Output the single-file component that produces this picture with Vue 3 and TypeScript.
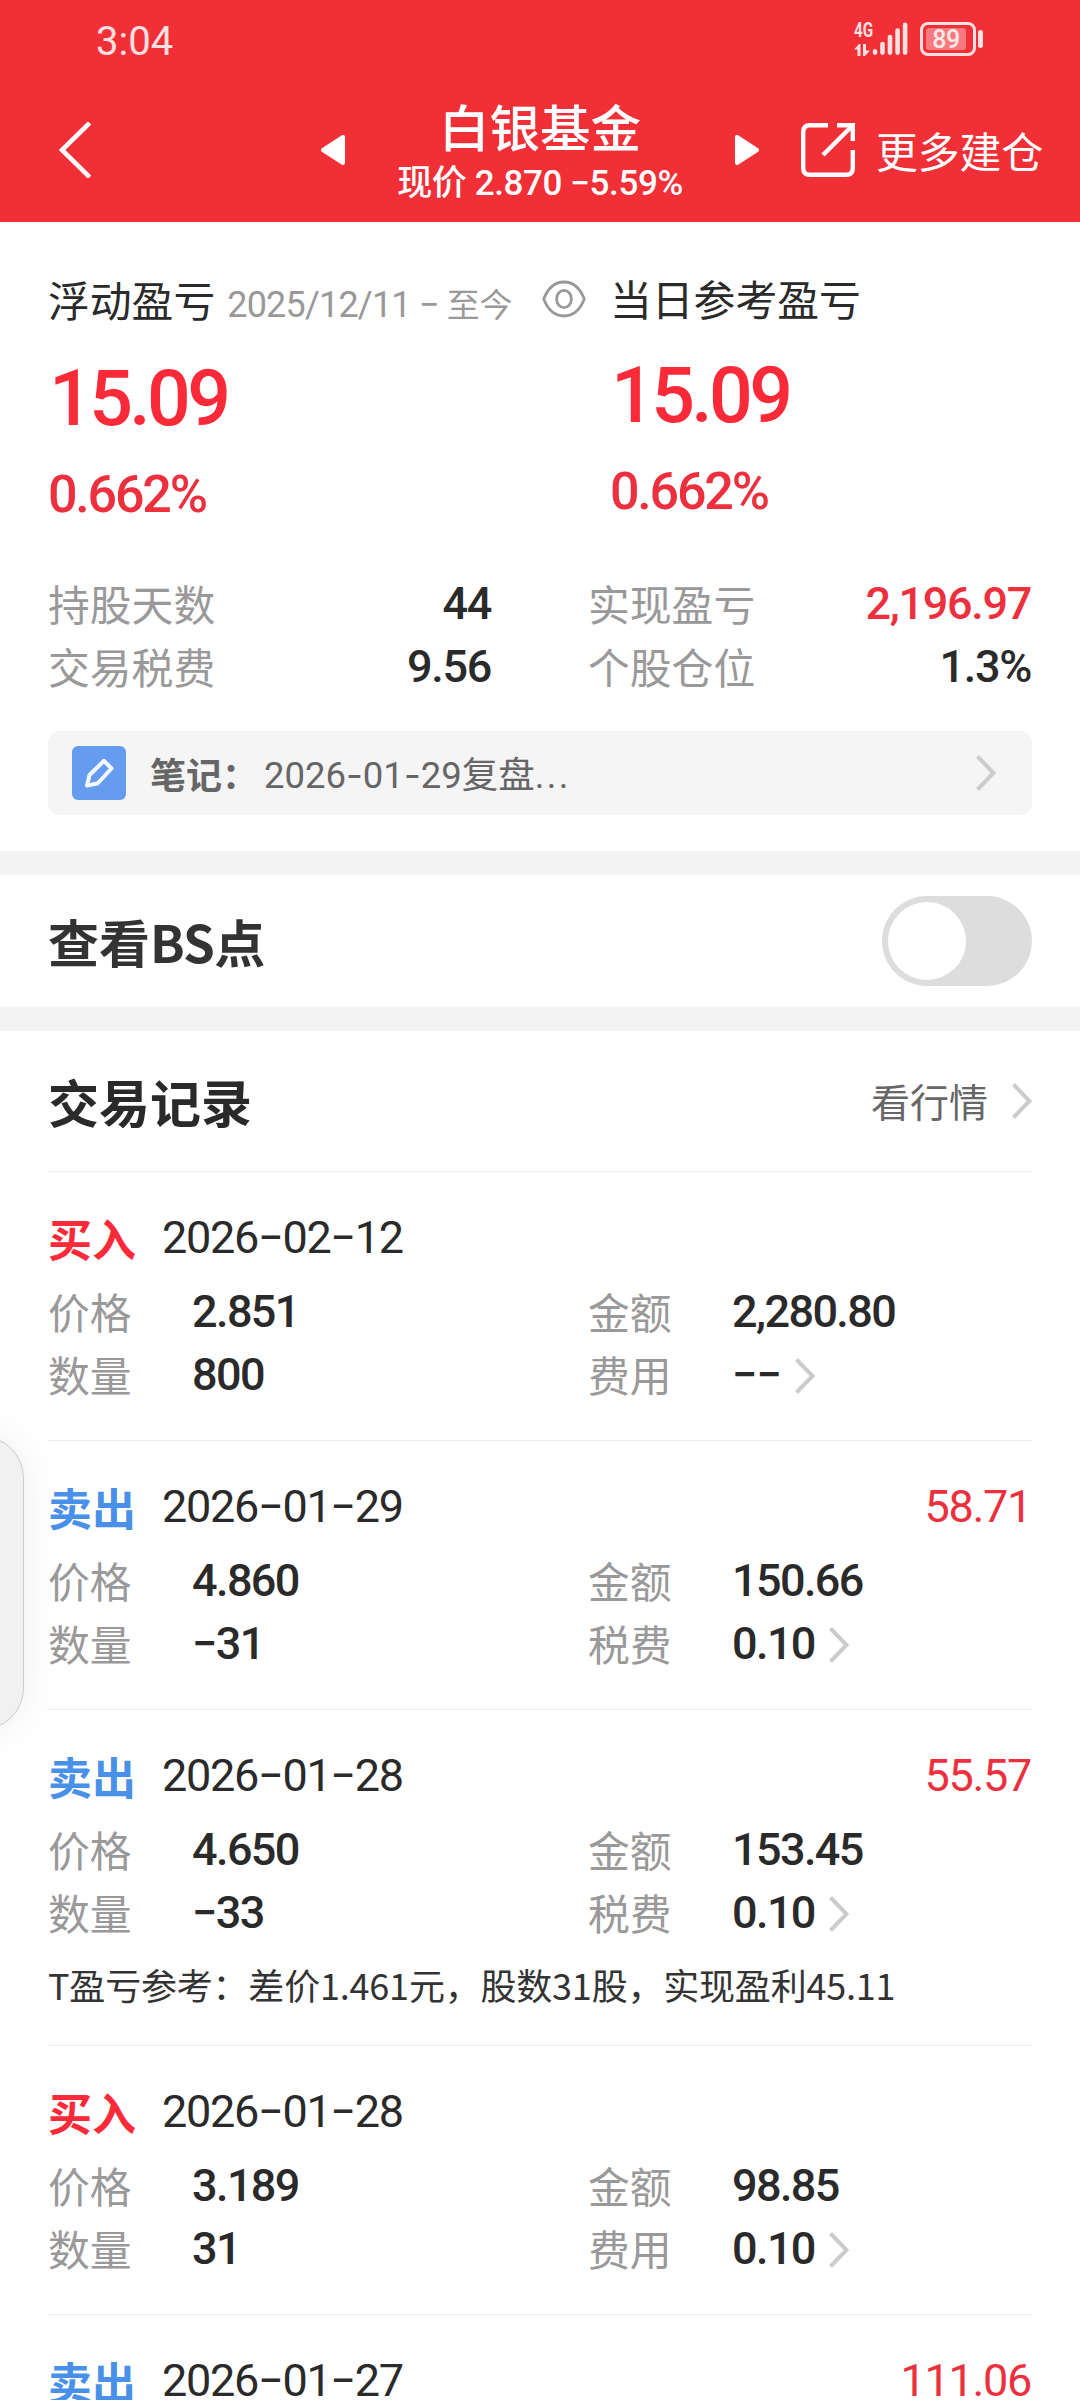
<script setup lang="ts">
interface TradeRecord {
  side: 'buy' | 'sell'
  date: string
  price?: string
  qty?: string
  amount?: string
  feeLabel?: string
  fee?: string
  profit?: string
  note?: string
}

const records: TradeRecord[] = [
  { side: 'buy', date: '2026−02−12', price: '2.851', qty: '800', amount: '2,280.80', feeLabel: '费用', fee: '−−' },
  { side: 'sell', date: '2026−01−29', price: '4.860', qty: '−31', amount: '150.66', feeLabel: '税费', fee: '0.10', profit: '58.71' },
  {
    side: 'sell', date: '2026−01−28', price: '4.650', qty: '−33', amount: '153.45', feeLabel: '税费', fee: '0.10', profit: '55.57',
    note: 'T盈亏参考：差价1.461元，股数31股，实现盈利45.11',
  },
  { side: 'buy', date: '2026−01−28', price: '3.189', qty: '31', amount: '98.85', feeLabel: '费用', fee: '0.10' },
  { side: 'sell', date: '2026−01−27', profit: '111.06' },
]

const stats = [
  { label: '持股天数', value: '44', up: false },
  { label: '实现盈亏', value: '2,196.97', up: true },
  { label: '交易税费', value: '9.56', up: false },
  { label: '个股仓位', value: '1.3%', up: false },
]
</script>

<template>
  <div class="screen">
    <header class="top">
      <div class="status">
        <span class="time">3:04</span>
        <div class="indicators">
          <div class="net">
            <span class="net-type">4G</span>
            <svg width="16" height="12" viewBox="0 0 16 12">
              <path d="M0 5.5 5 0H6.5V12H3.5V5.5ZM9 0H12V6.5H16L11 12H9Z" fill="#ffe0e1" />
            </svg>
          </div>
          <svg class="bars" width="36" height="34" viewBox="0 0 36 34">
            <g stroke="#ffe0e1" stroke-width="4.6" stroke-linecap="round">
              <path d="M3 29.3V30.6M10.5 22V30.6M18 15V30.6M25.6 8.5V30.6M33.1 2.8V30.6" />
            </g>
          </svg>
          <div class="battery"><div class="level">89</div></div>
          <div class="battery-cap"></div>
        </div>
      </div>
      <nav class="nav">
        <svg class="back" width="32" height="56" viewBox="0 0 32 56">
          <path d="M29 2.5 3 28 29 53.5" fill="none" stroke="#fff" stroke-width="4.6" stroke-linecap="square" />
        </svg>
        <svg width="24" height="30" viewBox="0 0 24 30">
          <path d="M22 2V28L2 15Z" fill="#fff" stroke="#fff" stroke-width="4" stroke-linejoin="round" />
        </svg>
        <div class="heading">
          <div class="title">白银基金</div>
          <div class="subtitle">现价 2.870 −5.59%</div>
        </div>
        <svg width="24" height="30" viewBox="0 0 24 30">
          <path d="M2 2V28L22 15Z" fill="#fff" stroke="#fff" stroke-width="4" stroke-linejoin="round" />
        </svg>
        <svg class="share" width="54" height="54" viewBox="0 0 54 54">
          <g fill="none" stroke="#fff" stroke-width="4.4">
            <path d="M27 2.2H9Q2.2 2.2 2.2 9V45Q2.2 51.8 9 51.8H45Q51.8 51.8 51.8 45V27" />
            <path d="M36 2.2H51.8V18M51 3 22 32" />
          </g>
        </svg>
        <span class="more">更多建仓</span>
      </nav>
    </header>

    <section class="summary">
      <div class="profits">
        <div class="profit float">
          <div class="profit-head">
            <span class="profit-label">浮动盈亏</span>
            <span class="period">2025/12/11 − <i>至今</i></span>
            <svg class="eye" width="44" height="38" viewBox="0 0 44 38">
              <g fill="none" stroke="#999" stroke-width="2.8">
                <path d="M1.7 19C6 8 13 2 22 2S38 8 42.3 19C38 30 31 36 22 36S6 30 1.7 19Z" />
                <ellipse cx="22" cy="19" rx="7.4" ry="8.6" />
              </g>
            </svg>
          </div>
          <div class="big">15.09</div>
          <div class="pct">0.662%</div>
        </div>
        <div class="profit">
          <div class="profit-head"><span class="profit-label">当日参考盈亏</span></div>
          <div class="big">15.09</div>
          <div class="pct">0.662%</div>
        </div>
      </div>
      <div class="stats">
        <div v-for="s in stats" :key="s.label" class="stat">
          <span class="label">{{ s.label }}</span>
          <span class="num" :class="{ up: s.up }">{{ s.value }}</span>
        </div>
      </div>
      <div class="memo">
        <svg class="memo-icon" width="54" height="54" viewBox="0 0 54 54">
          <rect width="54" height="54" rx="6" fill="#659cf0" />
          <path d="M15 39.5 17.5 29 32 14.8 39.5 22.5 25.5 37.5Z" fill="none" stroke="#f4f9ff" stroke-width="4" stroke-linejoin="round" />
        </svg>
        <span class="memo-label">笔记：</span>
        <span class="memo-text">2026<i>-</i>01<i>-</i>29复盘<b>...</b></span>
        <svg class="chev" width="20" height="36" viewBox="0 0 20 36">
          <path d="M1.5 1.5 17.5 18 1.5 34.5" fill="none" stroke="#ccc" stroke-width="4" />
        </svg>
      </div>
    </section>

    <section class="switch-row">
      <h2>查看<em>BS</em>点</h2>
      <div class="toggle"><div class="knob"></div></div>
    </section>

    <section class="trades">
      <div class="trades-head">
        <h2>交易记录</h2>
        <span class="market">看行情</span>
        <svg class="chev" width="20" height="36" viewBox="0 0 20 36">
          <path d="M1.5 1.5 17.5 18 1.5 34.5" fill="none" stroke="#ccc" stroke-width="4" />
        </svg>
      </div>
      <article v-for="(r, i) in records" :key="i" class="record">
        <div class="record-head">
          <span class="side" :class="r.side">{{ r.side === 'buy' ? '买入' : '卖出' }}</span>
          <span class="date">{{ r.date }}</span>
          <span v-if="r.profit" class="gain">{{ r.profit }}</span>
        </div>
        <div v-if="r.price" class="cells">
          <div class="cell"><span class="label">价格</span><span class="num">{{ r.price }}</span></div>
          <div class="cell"><span class="label">金额</span><span class="num">{{ r.amount }}</span></div>
          <div class="cell"><span class="label">数量</span><span class="num">{{ r.qty }}</span></div>
          <div class="cell">
            <span class="label">{{ r.feeLabel }}</span><span class="num" :class="{ empty: r.fee === '−−' }">{{ r.fee }}</span>
            <svg class="chev fee-chev" width="20" height="36" viewBox="0 0 20 36">
              <path d="M1.5 1.5 17.5 18 1.5 34.5" fill="none" stroke="#ccc" stroke-width="4" />
            </svg>
          </div>
        </div>
        <div v-if="r.note" class="note">{{ r.note }}</div>
      </article>
    </section>

    <div class="handle"></div>
  </div>
</template>

<style>
body {
  margin: 0;
  background: #fff;
}
</style>

<style scoped>
.screen {
  position: relative;
  width: 1080px;
  height: 2400px;
  overflow: hidden;
  background: #fff;
  color: #2a2a2a;
  font-family: Roboto, "Noto Sans CJK SC", sans-serif;
  white-space: nowrap;
}
.screen * {
  box-sizing: border-box;
}
.screen svg {
  display: block;
  flex: none;
}
h2,
i,
em,
b {
  margin: 0;
  font-style: normal;
  font-weight: inherit;
}

.top {
  height: 222px;
  background: #f12f37;
  color: #fff;
}
.status {
  height: 80px;
  padding: 0 97px 0 96px;
  display: flex;
  justify-content: space-between;
  align-items: flex-start;
}
.time {
  font-size: 40px;
  line-height: 83px;
  font-weight: 450;
  color: #ffe0e1;
}
.indicators {
  display: flex;
  padding-top: 22px;
  height: 56px;
  align-items: flex-end;
}
.net {
  width: 18px;
  display: flex;
  flex-direction: column;
  gap: 6px;
}
.net-type {
  font-size: 20px;
  line-height: 16px;
  font-weight: 700;
  color: #ffe0e1;
  transform: scaleX(0.76);
  transform-origin: 0 50%;
}
.battery {
  width: 56px;
  height: 34px;
  margin-left: 12px;
  padding: 3px 7px 3px 3px;
  border: 3px solid #ffe0e1;
  border-radius: 8px;
}
.level {
  height: 22px;
  border-radius: 3px;
  background: #f8797e;
  color: #ffe8e8;
  font-size: 25px;
  line-height: 23px;
  font-weight: 500;
  letter-spacing: -0.5px;
  text-align: center;
}
.battery-cap {
  width: 5px;
  height: 18px;
  margin: 0 0 8px 2px;
  border-radius: 3px;
  background: #ffe0e1;
}
.nav {
  height: 142px;
  display: flex;
  align-items: center;
  padding-left: 59px;
}
.nav svg {
  position: relative;
  top: -1px;
}
.back {
  margin-right: 230px;
}
.heading {
  width: 390px;
  text-align: center;
}
.title {
  font: 500 50.5px/58px "Noto Sans CJK SC", sans-serif;
  margin-bottom: 8px;
}
.subtitle {
  font-size: 35px;
  line-height: 44px;
  font-weight: 500;
  letter-spacing: -0.4px;
}
.share {
  margin: 0 21px 0 42px;
}
.more {
  font: 400 41.8px/60px "Noto Sans CJK SC", sans-serif;
  margin-top: -2px;
}

.summary {
  height: 653px;
  padding: 47px 48px 0;
  border-bottom: 24px solid #f4f4f4;
}
.profits {
  display: flex;
  height: 304px;
}
.float {
  width: 562px;
}
.profit-head {
  display: flex;
  height: 60px;
  align-items: baseline;
  line-height: 60px;
}
.profit:not(.float) .profit-head {
  margin-top: -1px;
}
.profit-label {
  font: 400 41.8px/60px "Noto Sans CJK SC", sans-serif;
}
.period {
  width: 315px;
  margin-left: 12px;
  color: #999;
  font-size: 36px;
  line-height: 60px;
  letter-spacing: -0.8px;
}
.period i {
  font-size: 33px;
  letter-spacing: -0.3px;
}
.eye {
  align-self: center;
}
.big {
  margin-top: 20px;
  padding-left: 1px;
  color: #fb2a39;
  font-size: 77px;
  line-height: 100px;
  font-weight: 500;
  letter-spacing: -3.6px;
}
.pct {
  margin-top: 16px;
  color: #ec303e;
  font-size: 52px;
  line-height: 60px;
  font-weight: 500;
  letter-spacing: -2.2px;
}
.profit:not(.float) .big {
  margin-top: 18px;
}
.stats {
  display: grid;
  grid-template-columns: 444px 444px;
  column-gap: 96px;
}
.stat {
  display: flex;
  justify-content: space-between;
  height: 63px;
  align-items: center;
}
.label {
  color: #999;
  height: 63px;
  font: 400 41.8px/61px "Noto Sans CJK SC", sans-serif;
}
.num {
  font-size: 45px;
  line-height: 62px;
  height: 63px;
  font-weight: 500;
  letter-spacing: -1.6px;
}
.stat .num {
  margin-right: 1px;
  letter-spacing: -1.3px;
}
.num.empty {
  letter-spacing: -0.8px;
}
.num.up {
  color: #ec303e;
}
.memo {
  height: 84px;
  margin-top: 32px;
  padding: 0 36px 0 24px;
  display: flex;
  align-items: center;
  border-radius: 12px;
  background: #f5f5f5;
  color: #666;
}
.memo-label {
  width: 114px;
  margin-left: 24px;
  font: 700 36px/84px "Noto Sans CJK SC", sans-serif;
}
.memo-text {
  flex: 1;
  font-size: 36.5px;
  line-height: 84px;
  padding-top: 4px;
}
.memo-text i {
  font-family: Inter, sans-serif;
}
.memo-text b {
  letter-spacing: 2.4px;
}

.switch-row {
  height: 156px;
  padding: 0 48px;
  display: flex;
  align-items: center;
  justify-content: space-between;
  border-bottom: 24px solid #f4f4f4;
}
h2 {
  font: 700 51px/72px "Noto Sans CJK SC", sans-serif;
}
.switch-row h2 {
  color: #333;
}
.switch-row em {
  letter-spacing: -0.7px;
}
.toggle {
  width: 150px;
  height: 90px;
  padding: 6px;
  border-radius: 45px;
  background: #ddd;
}
.knob {
  width: 78px;
  height: 78px;
  border-radius: 50%;
  background: #fff;
}

.trades {
  padding: 0 48px;
}
.trades-head {
  height: 141px;
  display: flex;
  align-items: center;
  border-bottom: 1px solid #ebebeb;
}
.trades-head h2 {
  flex: 1;
}
.market {
  margin-right: 24px;
  color: #666;
  font: 400 39px/58px "Noto Sans CJK SC", sans-serif;
  height: 60px;
}
.record {
  padding: 36px 0 33px;
  border-bottom: 1px solid #ebebeb;
}
.record-head {
  display: flex;
  height: 61px;
  align-items: center;
  margin-bottom: 12px;
}
.side {
  width: 114px;
  font: 700 44px/61px "Noto Sans CJK SC", sans-serif;
}
.buy {
  color: #fb2a39;
}
.sell {
  color: #4990e8;
}
.date {
  flex: 1;
  font-size: 45px;
  line-height: 59px;
  height: 61px;
  font-weight: 450;
  letter-spacing: -1.3px;
}
.gain {
  color: #ec303e;
  font-size: 45px;
  line-height: 59px;
  height: 61px;
  font-weight: 450;
  letter-spacing: -1.3px;
  margin-right: 1px;
}
.cells {
  display: grid;
  grid-template-columns: 540px 444px;
}
.cell {
  display: flex;
  height: 63px;
  align-items: center;
}
.cell .label {
  width: 144px;
}
.fee-chev {
  margin-left: 14px;
}
.note {
  padding-top: 12px;
  color: #333;
  font: 400 36px/55px "Noto Sans CJK SC", sans-serif;
  letter-spacing: -0.2px;
}

.handle {
  position: absolute;
  left: -60px;
  top: 1436px;
  width: 84px;
  height: 294px;
  border: 1px solid #ccc;
  border-radius: 42px;
  background: #f1f1f1;
  box-shadow: 0 0 40px rgba(0, 0, 0, 0.07);
}
</style>
